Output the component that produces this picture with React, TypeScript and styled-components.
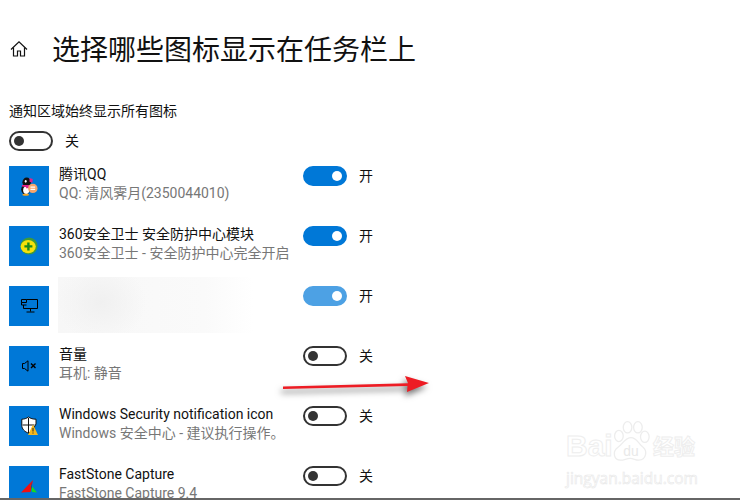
import styled, { createGlobalStyle } from "styled-components";
import type { ReactNode } from "react";

const FONT = `Roboto, "Noto Sans CJK SC", sans-serif`;

const GlobalStyle = createGlobalStyle`
  html, body {
    margin: 0;
    padding: 0;
    background: #fff;
  }
`;

const HomeIcon = () => (
  <svg width="18" height="18" viewBox="0 0 18 18" fill="none" stroke="#111" strokeWidth="1.2">
    <path d="M1 9.500 9 1.800l8 7.700" />
    <path d="M3.500 7.500v8.500h4v-5h3v5h4V7.500" />
  </svg>
);

const QQIcon = () => (
  <svg width="17" height="19" viewBox="0 0 18 20">
    <ellipse cx="6" cy="5.500" rx="4.500" ry="5" fill="#111" />
    <ellipse cx="5" cy="13" rx="4.800" ry="5.500" fill="#111" />
    <ellipse cx="5.500" cy="14" rx="3.200" ry="4" fill="#fff" />
    <ellipse cx="5" cy="4.500" rx="1" ry="1.400" fill="#fff" />
    <path d="M1 8.500h9l-1 2.500-3 1-1-1.500-4-.5z" fill="#e0218a" />
    <path d="M9 1l3.500 1-.5 4-3-1z" fill="#e0218a" />
    <ellipse cx="5" cy="18.800" rx="3.500" ry="1" fill="#f5a623" />
    <circle cx="12.500" cy="12" r="5" fill="#f6a56c" />
    <path d="M10 10.600h5M10 13h5" stroke="#fff" strokeWidth="1.200" />
  </svg>
);

const ShieldPlusIcon = () => (
  <svg width="18" height="18" viewBox="0 0 18 18">
    <circle cx="9" cy="9" r="8.600" fill="#3f9a3a" />
    <ellipse cx="8.200" cy="9.600" rx="7.600" ry="6.600" fill="#f5e10a" />
    <path d="M8.400 5.400v8M4.400 9.400h8" stroke="#1a8a1e" strokeWidth="2.400" />
  </svg>
);

const MonitorIcon = () => (
  <svg width="17" height="14" viewBox="0 0 17 14" fill="none" stroke="#000" strokeWidth="1">
    <path d="M5.500.500h11v9H2.500V6" />
    <path d="M.500.500h5v3h-5zM.500 3.500v2.500h5M9.500 9.500v3M5.500 13h8" />
  </svg>
);

const MuteIcon = () => (
  <svg width="15" height="12" viewBox="0 0 15 12" fill="none" stroke="#000" strokeWidth="1">
    <path d="M.500 3.500h2L6 .800v10.400L2.500 8.500h-2z" />
    <path d="M9 3.500l4.500 4.500M13.500 3.500 9 8" strokeWidth="1.400" />
  </svg>
);

const SecurityIcon = () => (
  <svg width="17" height="20" viewBox="0 0 17 20">
    <path d="M7.500 1C5.500 2.500 3 3.200.800 3.200v6c0 4 3 6.500 6.700 8 1.500-.600 2.800-1.400 3.800-2.400L15 8V3.200C12 3.200 9.500 2.500 7.500 1z" fill="#fff" stroke="#111" strokeWidth="1" />
    <path d="M7.500 2v15M1.500 9h12" stroke="#111" strokeWidth="1" />
    <path d="M12 8.500 17 19H7z" fill="#f5b81c" />
    <path d="M12 12v3.500M12 16.500v1" stroke="#222" strokeWidth="1" />
  </svg>
);

const CaptureIcon = () => (
  <svg width="16" height="13" viewBox="0 0 16 13">
    <path d="M0 12.500 12 0 9.500 12z" fill="#f01010" />
    <path d="M9.500 4.500 16 12.500 11 12z" fill="#14d824" />
    <path d="M10 2l1 5-1 3z" fill="#1c3f9c" />
  </svg>
);

const RedArrow = () => (
  <svg width="160" height="32" viewBox="0 0 160 32">
    <path d="M3 16.500 128 13.200 125 6 149 13 127 22 127.500 16 3 19z" fill="#ed1c24" />
  </svg>
);

const Paw = () => (
  <svg width="38" height="44" viewBox="0 0 44 48" fill="none" stroke="#ededed" strokeWidth="1.500">
    <ellipse cx="8" cy="17" rx="5" ry="6.500" />
    <ellipse cx="18" cy="7" rx="5" ry="6.500" />
    <ellipse cx="30" cy="7" rx="5" ry="6.500" />
    <ellipse cx="38" cy="18" rx="5" ry="6.500" />
    <path d="M22 19c7 0 8 7 14 11 5 4 4 15-5 15-4 0-6-2-10-2s-7 2-11 2C2 45 0 35 7 30c6-4 8-11 15-11z" />
    <text x="22" y="40" textAnchor="middle" fontFamily="Liberation Sans, sans-serif" fontSize="16" fill="#e9e9e9" stroke="none">
      du
    </text>
  </svg>
);

type Item = {
  id: string;
  icon: ReactNode;
  name?: string;
  detail?: string;
  on: boolean;
  dim?: boolean;
};

const items: Item[] = [
  { id: "qq", icon: <QQIcon />, name: "腾讯QQ", detail: "QQ: 清风霁月(2350044010)", on: true },
  {
    id: "360",
    icon: <ShieldPlusIcon />,
    name: "360安全卫士 安全防护中心模块",
    detail: "360安全卫士 - 安全防护中心完全开启",
    on: true,
  },
  { id: "hidden", icon: <MonitorIcon />, on: true, dim: true },
  { id: "volume", icon: <MuteIcon />, name: "音量", detail: "耳机: 静音", on: false },
  {
    id: "security",
    icon: <SecurityIcon />,
    name: "Windows Security notification icon",
    detail: "Windows 安全中心 - 建议执行操作。",
    on: false,
  },
  {
    id: "capture",
    icon: <CaptureIcon />,
    name: "FastStone Capture",
    detail: "FastStone Capture 9.4",
    on: false,
  },
];

export default function App() {
  return (
    <>
      <GlobalStyle />
      <Page>
        <Header>
          <HomeSlot>
            <HomeIcon />
          </HomeSlot>
          <Title>选择哪些图标显示在任务栏上</Title>
        </Header>
        <MasterLabel>通知区域始终显示所有图标</MasterLabel>
        <MasterSwitch>
          <Toggle $on={false} />
          <SwitchText>关</SwitchText>
        </MasterSwitch>
        <List>
          {items.map((item) => (
            <Row key={item.id}>
              <IconTile>{item.icon}</IconTile>
              <Info>
                {item.name ? (
                  <>
                    <Name>{item.name}</Name>
                    <Detail>{item.detail}</Detail>
                  </>
                ) : (
                  <Smudge />
                )}
              </Info>
              <RowSwitch>
                <Toggle $on={item.on} $dim={item.dim} />
                <SwitchText>{item.on ? "开" : "关"}</SwitchText>
              </RowSwitch>
            </Row>
          ))}
        </List>
        <ArrowLayer>
          <RedArrow />
        </ArrowLayer>
        <Watermark>
          <LogoLine>
            <LogoWord>Bai</LogoWord>
            <Paw />
            <LogoCn>经验</LogoCn>
          </LogoLine>
          <LogoUrl>jingyan.baidu.com</LogoUrl>
        </Watermark>
      </Page>
    </>
  );
}

const Page = styled.div`
  position: relative;
  box-sizing: border-box;
  width: 740px;
  height: 500px;
  overflow: hidden;
  padding-left: 9px;
  background: #fff;
  font-family: ${FONT};
  color: #000;
  border-bottom: 2px solid #666;
`;

const Header = styled.header`
  display: flex;
  align-items: center;
  height: 50px;
  padding-top: 24px;
`;

const HomeSlot = styled.div`
  display: flex;
  width: 43px;
  padding-left: 1px;
  box-sizing: border-box;
`;

const Title = styled.h1`
  margin: 0;
  padding-top: 4px;
  font-size: 28px;
  font-weight: 400;
  line-height: 50px;
  color: #111;
`;

const MasterLabel = styled.div`
  margin-top: 27px;
  font-size: 14px;
  line-height: 20px;
  color: #111;
`;

const MasterSwitch = styled.div`
  display: flex;
  align-items: center;
  gap: 12px;
  margin-top: 10px;
  height: 20px;
`;

const Toggle = styled.span<{ $on: boolean; $dim?: boolean }>`
  display: flex;
  align-items: center;
  justify-content: ${({ $on }) => ($on ? "flex-end" : "flex-start")};
  box-sizing: border-box;
  width: 44px;
  height: 20px;
  padding: 0 3px;
  border-radius: 10px;
  border: 2px solid
    ${({ $on, $dim }) => ($on ? ($dim ? "#4da1e4" : "#0078d7") : "#333")};
  background: ${({ $on, $dim }) => ($on ? ($dim ? "#4da1e4" : "#0078d7") : "#fff")};

  &::after {
    content: "";
    width: 10px;
    height: 10px;
    border-radius: 50%;
    background: ${({ $on }) => ($on ? "#fff" : "#333")};
  }
`;

const SwitchText = styled.span`
  font-size: 14px;
  line-height: 20px;
  color: #111;
`;

const List = styled.div`
  display: flex;
  flex-direction: column;
  gap: 20px;
  margin-top: 15px;
`;

const Row = styled.div`
  display: flex;
  align-items: flex-start;
  height: 40px;
`;

const IconTile = styled.div`
  display: flex;
  align-items: center;
  justify-content: center;
  flex: none;
  width: 40px;
  height: 40px;
  background: #0078d7;
`;

const Info = styled.div`
  width: 254px;
  padding-left: 10px;
  box-sizing: border-box;
`;

const Name = styled.div`
  margin-top: -1px;
  font-size: 14px;
  line-height: 19px;
  color: #111;
  white-space: nowrap;
`;

const Detail = styled.div`
  font-size: 14px;
  line-height: 19px;
  color: #777;
  white-space: nowrap;
`;

const Smudge = styled.div`
  width: 195px;
  height: 56px;
  margin: -9px 0 0 -1px;
  background:
    radial-gradient(ellipse 45px 40px at 22% 45%, #f0f0f0, transparent),
    linear-gradient(90deg, #f7f7f7, #fafafa 75%, #fff);
`;

const RowSwitch = styled.div`
  display: flex;
  align-items: center;
  gap: 12px;
  height: 20px;
`;

const Overlay = styled.div`
  position: absolute;
`;

const ArrowLayer = styled(Overlay)`
  left: 280px;
  top: 370px;
  line-height: 0;
  filter: drop-shadow(-2px 4px 3px rgba(0, 0, 0, 0.55));
`;

const Watermark = styled(Overlay)`
  left: 566px;
  top: 420px;
  width: 140px;
  color: #eaeaea;
`;

const LogoLine = styled.div`
  display: flex;
  align-items: center;
  height: 44px;
`;

const LogoWord = styled.span`
  width: 46px;
  font-family: "Liberation Sans", sans-serif;
  font-size: 30px;
  font-weight: 700;
  line-height: 30px;
  color: #fff;
  -webkit-text-stroke: 1px #eeeeee;
  margin-top: 8px;
`;

const LogoCn = styled.span`
  font-size: 21px;
  font-weight: 700;
  line-height: 24px;
  margin: 10px 0 0 3px;
  color: #fff;
  -webkit-text-stroke: 1px #eeeeee;
`;

const LogoUrl = styled.div`
  font-family: "Open Sans", sans-serif;
  font-size: 15.500px;
  line-height: 18px;
  margin-top: 5px;
  color: #fff;
  -webkit-text-stroke: 0.600px #e8e8e8;
`;
